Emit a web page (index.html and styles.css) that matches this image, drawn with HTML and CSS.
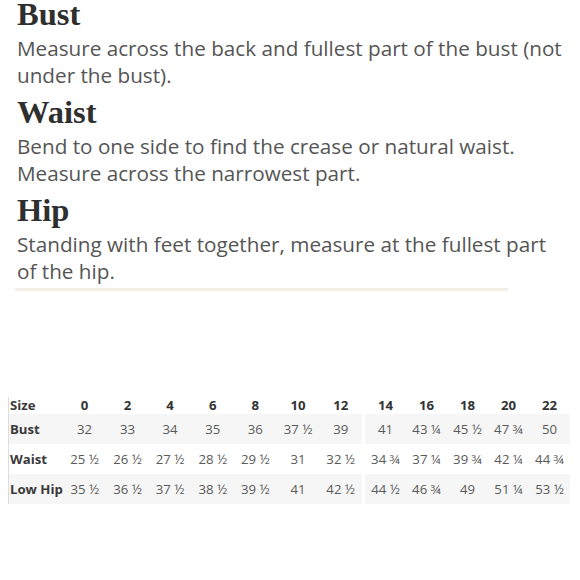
FILE: index.html
```html
<!DOCTYPE html>
<html lang="en">
<head>
<meta charset="utf-8">
<title>Size guide</title>
<link rel="stylesheet" href="styles.css">
</head>
<body>
<section class="guide">
  <h2 class="guide-title">Bust</h2>
  <p class="guide-text">Measure across the back and fullest part of the bust (not under the bust).</p>
  <h2 class="guide-title">Waist</h2>
  <p class="guide-text">Bend to one side to find the crease or natural waist. Measure across the narrowest part.</p>
  <h2 class="guide-title">Hip</h2>
  <p class="guide-text">Standing with feet together, measure at the fullest part of the hip.</p>
  <div class="guide-rule"></div>
</section>

<section class="charts">
  <table class="chart chart-left">
    <colgroup><col class="col-label"><col span="7" class="col-num"></colgroup>
    <tr class="row-head"><th class="label">Size</th><th>0</th><th>2</th><th>4</th><th>6</th><th>8</th><th>10</th><th>12</th></tr>
    <tr class="row-shade"><th class="label">Bust</th><td>32</td><td>33</td><td>34</td><td>35</td><td>36</td><td>37 ½</td><td>39</td></tr>
    <tr><th class="label">Waist</th><td>25 ½</td><td>26 ½</td><td>27 ½</td><td>28 ½</td><td>29 ½</td><td>31</td><td>32 ½</td></tr>
    <tr class="row-shade"><th class="label">Low Hip</th><td>35 ½</td><td>36 ½</td><td>37 ½</td><td>38 ½</td><td>39 ½</td><td>41</td><td>42 ½</td></tr>
  </table>
  <table class="chart chart-right">
    <colgroup><col span="5" class="col-num-r"></colgroup>
    <tr class="row-head"><th>14</th><th>16</th><th>18</th><th>20</th><th>22</th></tr>
    <tr class="row-shade"><td>41</td><td>43 ¼</td><td>45 ½</td><td>47 ¾</td><td>50</td></tr>
    <tr><td>34 ¾</td><td>37 ¼</td><td>39 ¾</td><td>42 ¼</td><td>44 ¾</td></tr>
    <tr class="row-shade"><td>44 ½</td><td>46 ¾</td><td>49</td><td>51 ¼</td><td>53 ½</td></tr>
  </table>
</section>
</body>
</html>
```

FILE: styles.css
```css
html, body {
  margin: 0;
  padding: 0;
  background: #ffffff;
}

body {
  width: 580px;
  height: 580px;
  overflow: hidden;
  font-family: "Open Sans", "Liberation Sans", sans-serif;
}

.guide {
  padding: 0 15px 0 17px;
}

.guide-title {
  margin: 0;
  font-family: "Liberation Serif", "Times New Roman", serif;
  font-weight: 700;
  font-size: 32.5px;
  line-height: 28px;
  color: #2f2f2f;
}

.guide-text {
  margin: 7px 0 9px;
  font-size: 20.7px;
  line-height: 27px;
  color: #555555;
}

.guide-text:last-of-type {
  margin-bottom: 3px;
}

.guide-rule {
  margin-left: -2px;
  width: 493px;
  height: 2px;
  background: #f1efe5;
  box-shadow: 0 1px 1px rgba(230, 226, 210, 0.5);
}

.charts {
  display: flex;
  align-items: flex-start;
  gap: 3px;
  margin: 107px 0 0 8px;
}

.chart {
  border-collapse: collapse;
  table-layout: fixed;
  font-size: 13.2px;
  color: #5a5a5a;
}

.chart-left {
  width: 354px;
  border-left: 1px solid #dcdcdc;
}

.chart-right {
  width: 205px;
}

.col-label { width: 55px; }

.chart th,
.chart td {
  padding: 0;
  text-align: center;
  white-space: nowrap;
}

.chart th {
  font-weight: 700;
  color: #333333;
}

.chart .label {
  text-align: left;
  padding-left: 1px;
  color: #3a3a3a;
}

.row-head th {
  height: 17px;
  line-height: 17px;
}

.chart tr:not(.row-head) th,
.chart tr:not(.row-head) td {
  height: 30px;
}

.row-shade {
  background: #f6f6f6;
}
```
